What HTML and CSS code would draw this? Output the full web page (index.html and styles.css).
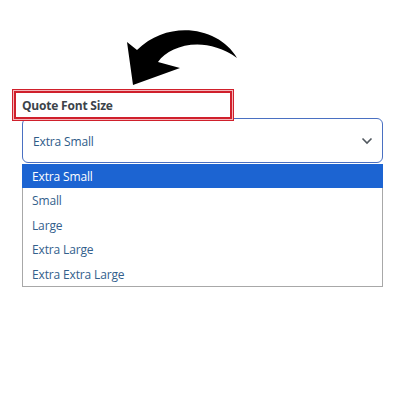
FILE: index.html
```html
<!DOCTYPE html>
<html>
<head>
<meta charset="utf-8">
<link rel="stylesheet" href="styles.css">
</head>
<body>
<div class="stage">
  <svg class="arrow" width="400" height="100" viewBox="0 0 400 100">
    <path d="M237 58 C220 28 170 18 137 50 L127 42 L133 85 L180 68 L158 62 C170 45 205 35 237 58 Z" fill="#000"/>
  </svg>
  <div class="highlight"></div>
  <div class="field">
    <label class="label">Quote Font Size</label>
    <div class="select">
      <span class="value">Extra Small</span>
      <svg class="chev" width="12" height="8" viewBox="0 0 12 8">
        <path d="M1.5 1.5 L6 6 L10.5 1.5" fill="none" stroke="#50575e" stroke-width="1.6"/>
      </svg>
    </div>
    <ul class="list">
      <li class="item active">Extra Small</li>
      <li class="item">Small</li>
      <li class="item">Large</li>
      <li class="item">Extra Large</li>
      <li class="item">Extra Extra Large</li>
    </ul>
  </div>
</div>
</body>
</html>
```
FILE: styles.css
```css
html, body {
  margin: 0;
  padding: 0;
  background: #fff;
}
.stage {
  position: relative;
  width: 400px;
  height: 400px;
  font-family: "Open Sans", "Noto Sans", sans-serif;
}
.arrow {
  position: absolute;
  left: 0;
  top: 0;
}
.highlight {
  position: absolute;
  left: 14px;
  top: 91px;
  width: 214px;
  height: 24px;
  border: 2px solid #d0202c;
  box-shadow: 0 0 0 1px #f4b8bc, 0 0 0 2px #d0202c;
}
.field {
  padding-top: 96px;
  margin-left: 22px;
  width: 361px;
}
.label {
  display: block;
  font-size: 12px;
  font-weight: 700;
  letter-spacing: -0.2px;
  color: #3c434a;
  line-height: 20px;
  height: 22px;
}
.select {
  box-sizing: border-box;
  height: 45px;
  border: 1.5px solid #4a70c2;
  border-radius: 6px;
  display: flex;
  align-items: center;
  justify-content: space-between;
  padding: 1px 9px 0 10px;
}
.value {
  font-size: 12px;
  letter-spacing: -0.15px;
  color: #2e5b88;
}
.list {
  list-style: none;
  margin: 1px 0 0 0;
  padding: 0;
  border: 1px solid #a8a8a8;
  border-top: none;
  width: 361px;
  box-sizing: border-box;
}
.item {
  height: 23.4px;
  line-height: 23.4px;
  padding-top: 1px;
  padding-left: 9px;
  font-size: 12px;
  letter-spacing: -0.15px;
  color: #33608c;
}
.item.active {
  background: #1c64d2;
  color: #fff;
  margin: 0 -1px;
  padding-left: 10px;
}
```
